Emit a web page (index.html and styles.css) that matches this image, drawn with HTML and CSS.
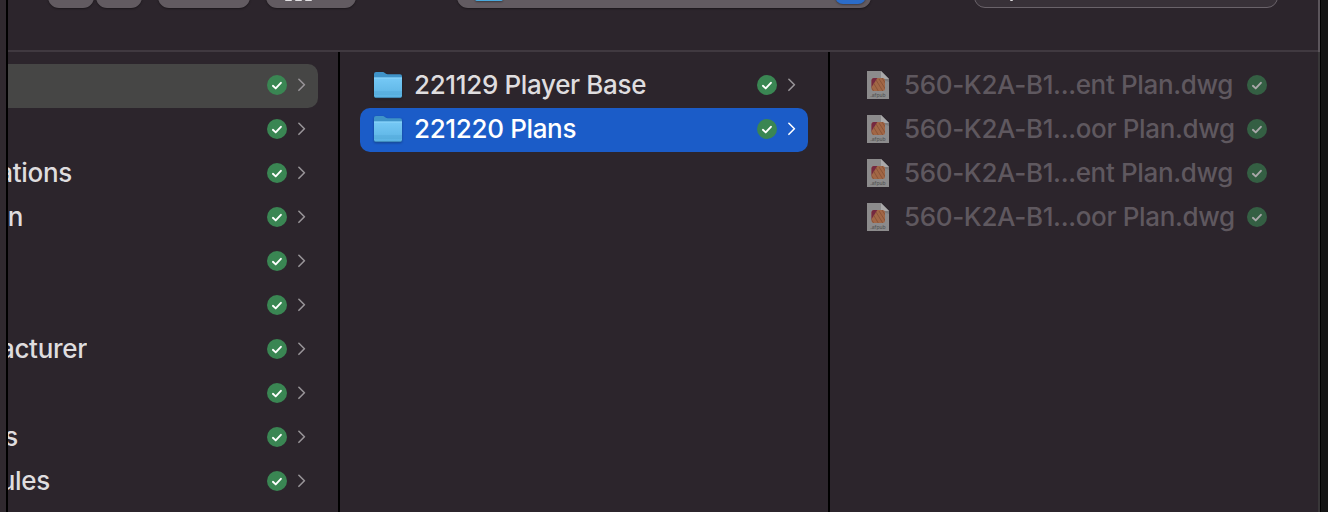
FILE: index.html
```html
<!DOCTYPE html>
<html lang="en">
<head>
    <meta charset="utf-8">
    <title>Open</title>
    <link rel="stylesheet" href="styles.css">
</head>
<body>
    <svg class="defs" width="0" height="0">
        <defs>
            <linearGradient id="folderFront" x1="0" y1="0" x2="0" y2="1">
                <stop offset="0" stop-color="#76c9f6"/>
                <stop offset="1" stop-color="#5ab2e2"/>
            </linearGradient>
            <clipPath id="badgeClip"><rect x="4.5" y="7" width="13.5" height="13" rx="2.5"/></clipPath>
        </defs>
        <symbol id="check" viewBox="0 0 20 20">
            <circle cx="10" cy="10" r="10" fill="#3a8653"/>
            <path d="M5.9 10.8l2.8 2.6 5.2-5.6" fill="none" stroke="#fff" stroke-width="1.9" stroke-linecap="round" stroke-linejoin="round"/>
        </symbol>
        <symbol id="chevron" viewBox="0 0 8 14">
            <path d="M.9 1.3l5.5 5.5L.9 12.3" fill="none" stroke="currentColor" stroke-width="1.6" stroke-linecap="round" stroke-linejoin="round"/>
        </symbol>
        <symbol id="folder" viewBox="0 0 30 28">
            <path d="M1 3a2 2 0 0 1 2-2h6.5c1 0 1.5.3 2.3 1l.8.6c.6.5 1 .6 1.9.6H27a2 2 0 0 1 2 2V10H1z" fill="#3f93c8"/>
            <path d="M1 6.600h28V25a1.800 1.800 0 0 1-1.800 1.800H2.800A1.800 1.800 0 0 1 1 25z" fill="url(#folderFront)"/>
            <path d="M1 7.100h28" stroke="#8ad4fa" stroke-width="1"/>
            <path d="M1 21h28M1 23h28" stroke="#4a9fcf" stroke-width=".8" opacity=".7"/>
            <path d="M1.400 25.600c.4.8.9 1 1.400 1h24.400c.5 0 1-.2 1.400-1" fill="none" stroke="#3c86b3" stroke-width=".7"/>
        </symbol>
        <symbol id="doc" viewBox="0 0 22 28">
            <path d="M0 0h14l8 8v20H0z" fill="#8c8b8c"/>
            <path d="M14 0l8 8h-6.500A1.500 1.500 0 0 1 14 6.500z" fill="#aaa9aa"/>
            <path d="M14 8h8v3z" fill="#7b7a7b"/>
            <g clip-path="url(#badgeClip)">
                <path d="M4 6h15v15H4z" fill="#a26746"/>
                <path d="M4 6h7L4 17z" fill="#752840"/>
                <path d="M9 9l8 13M6.500 12l6 10M12 8l7 11M4 16l4 6M15 7l4 6" stroke="#834f35" stroke-width=".8"/>
            </g>
            <text class="doc-ext" x="11" y="26" text-anchor="middle">.afpub</text>
        </symbol>
    </svg>

    <div class="screen">
        <div class="sidebar"></div>
        <div class="dialog">
            <div class="toolbar">
                <div class="btn btn--nav"></div>
                <div class="btn btn--nav"></div>
                <div class="btn btn--view"></div>
                <div class="btn btn--group">
                    <i></i><i></i><i></i>
                </div>
                <div class="btn btn--path">
                    <span class="path-icon"></span>
                    <span class="path-arrows"></span>
                </div>
                <div class="search"><span class="search-handle"></span></div>
            </div>
            <div class="columns">
                <ul class="column column--first">
                    <li class="row row--parent"><span class="clip"></span><svg class="check"><use href="#check"/></svg><svg class="chevron"><use href="#chevron"/></svg></li>
                    <li class="row"><span class="clip"></span><svg class="check"><use href="#check"/></svg><svg class="chevron"><use href="#chevron"/></svg></li>
                    <li class="row"><span class="clip" style="width: 64px">ations</span><svg class="check"><use href="#check"/></svg><svg class="chevron"><use href="#chevron"/></svg></li>
                    <li class="row"><span class="clip" style="width: 15px">n</span><svg class="check"><use href="#check"/></svg><svg class="chevron"><use href="#chevron"/></svg></li>
                    <li class="row"><span class="clip"></span><svg class="check"><use href="#check"/></svg><svg class="chevron"><use href="#chevron"/></svg></li>
                    <li class="row"><span class="clip"></span><svg class="check"><use href="#check"/></svg><svg class="chevron"><use href="#chevron"/></svg></li>
                    <li class="row"><span class="clip" style="width: 79px">acturer</span><svg class="check"><use href="#check"/></svg><svg class="chevron"><use href="#chevron"/></svg></li>
                    <li class="row"><span class="clip"></span><svg class="check"><use href="#check"/></svg><svg class="chevron"><use href="#chevron"/></svg></li>
                    <li class="row"><span class="clip" style="width: 10px">s</span><svg class="check"><use href="#check"/></svg><svg class="chevron"><use href="#chevron"/></svg></li>
                    <li class="row"><span class="clip" style="width: 42px">ules</span><svg class="check"><use href="#check"/></svg><svg class="chevron"><use href="#chevron"/></svg></li>
                </ul>
                <ul class="column column--second">
                    <li class="row"><svg class="folder"><use href="#folder"/></svg><span class="name">221129 Player Base</span><svg class="check"><use href="#check"/></svg><svg class="chevron"><use href="#chevron"/></svg></li>
                    <li class="row row--selected"><svg class="folder"><use href="#folder"/></svg><span class="name">221220 Plans</span><svg class="check"><use href="#check"/></svg><svg class="chevron"><use href="#chevron"/></svg></li>
                </ul>
                <ul class="column column--files">
                    <li class="row"><svg class="doc"><use href="#doc"/></svg><span class="name">560-K2A-B1...ent Plan.dwg</span><svg class="check"><use href="#check"/></svg></li>
                    <li class="row"><svg class="doc"><use href="#doc"/></svg><span class="name">560-K2A-B1...oor Plan.dwg</span><svg class="check"><use href="#check"/></svg></li>
                    <li class="row"><svg class="doc"><use href="#doc"/></svg><span class="name">560-K2A-B1...ent Plan.dwg</span><svg class="check"><use href="#check"/></svg></li>
                    <li class="row"><svg class="doc"><use href="#doc"/></svg><span class="name">560-K2A-B1...oor Plan.dwg</span><svg class="check"><use href="#check"/></svg></li>
                </ul>
            </div>
        </div>
        <div class="edge">
            <div class="edge__top"></div>
            <div class="edge__rest"></div>
        </div>
    </div>
</body>
</html>
```
FILE: styles.css
```css
* {
    box-sizing: border-box;
}

body {
    margin: 0;
    background: #141414;
    color: #dfdddf;
    font-family: Inter, "Liberation Sans", sans-serif;
    font-size: 26px;
    font-weight: 500;
    overflow: hidden;
}

ul, li {
    list-style-type: none;
    margin: 0;
    padding: 0;
}

.defs {
    display: block;
}

.screen {
    display: flex;
    height: 512px;
}

.sidebar {
    width: 8px;
    background: #30292f;
    border-right: 2px solid #000;
}

.dialog {
    width: 1310px;
    background: #2c252c;
    display: flex;
    flex-direction: column;
    overflow: hidden;
}

.edge {
    width: 3px;
    border-right: 1px solid #000;
    display: flex;
    flex-direction: column;
}

.edge__top {
    height: 52px;
    background: #5b555b;
}

.edge__rest {
    flex: 1;
    background: #393739;
}

/* toolbar, scrolled up so only the bottom of the controls shows */
.toolbar {
    display: flex;
    align-items: flex-end;
    height: 52px;
    padding: 0 40px 42px;
    border-bottom: 2px solid #403940;
}

.btn {
    flex: none;
    display: flex;
    align-items: flex-end;
    height: 44px;
    border-radius: 11px;
    background: #625b61;
    box-shadow: 0 1px 2px rgba(0, 0, 0, .4);
}

.btn--nav {
    width: 46px;
    margin-right: 2px;
}

.btn--view {
    width: 92px;
    margin-left: 14px;
}

.btn--group {
    width: 90px;
    margin-left: 16px;
    padding: 0 0 7px 19px;
    gap: 3px;
}

.btn--group i {
    width: 7px;
    height: 6px;
    border-radius: 1px;
    background: #e4e2e4;
}

.btn--path {
    width: 414px;
    margin-left: 101px;
    padding: 0 5px 4px 18px;
    justify-content: space-between;
}

.path-icon {
    width: 28px;
    height: 24px;
    margin-bottom: 3px;
    border-radius: 2px;
    background: #4aa9dc;
    box-shadow: 0 1px 2px rgba(0, 0, 0, .4);
}

.path-arrows {
    width: 31px;
    height: 32px;
    border-radius: 8px;
    background: #2b6cc9;
    box-shadow: 0 1px 2px rgba(0, 0, 0, .35);
}

.search {
    flex: none;
    display: flex;
    align-items: flex-end;
    width: 304px;
    height: 44px;
    margin-left: 103px;
    padding: 0 0 6px 35px;
    border: 1px solid #6a636a;
    border-radius: 11px;
    background: #383138;
}

.search-handle {
    width: 3px;
    height: 6px;
    border-radius: 1px;
    background: #dcdadc;
}

/* browser columns */
.columns {
    flex: 1;
    display: flex;
}

.column {
    padding: 12px 20px 0;
}

.column--first {
    width: 332px;
    padding-left: 0;
    border-right: 2px solid #000;
}

.column--second {
    width: 490px;
    border-right: 2px solid #000;
}

.column--files {
    width: 488px;
}

.row {
    display: flex;
    align-items: center;
    height: 44px;
    padding: 0 12px 2px 13px;
    border-radius: 10px;
    white-space: nowrap;
}

.column--first .row {
    padding-left: 0;
}

.row--parent {
    background: #464645;
    border-radius: 0 10px 10px 0;
}

.row--selected {
    background: #1b5cc8;
    color: #fff;
}

/* long names run out under the left edge */
.clip {
    display: flex;
    justify-content: flex-end;
    overflow: hidden;
    padding-bottom: 2px;
    letter-spacing: -.3px;
}

.name {
    padding-bottom: 2px;
    letter-spacing: -.35px;
}

.check {
    flex: none;
    width: 20px;
    height: 20px;
    margin-left: auto;
}

.chevron {
    flex: none;
    width: 8px;
    height: 14px;
    margin-left: 11px;
    color: #989498;
}

.row--selected .chevron {
    color: #fff;
}

.folder {
    flex: none;
    width: 30px;
    height: 28px;
    margin-right: 11px;
    filter: drop-shadow(0 1px 1px rgba(0, 0, 0, .3));
}

.column--files .row {
    padding: 0 31px 2px 17px;
    color: #5f585f;
}

.column--files .check {
    opacity: .6;
}

.doc {
    flex: none;
    width: 22px;
    height: 28px;
    margin-right: 15px;
}

.doc-ext {
    font-size: 5px;
    fill: #555;
}
```
